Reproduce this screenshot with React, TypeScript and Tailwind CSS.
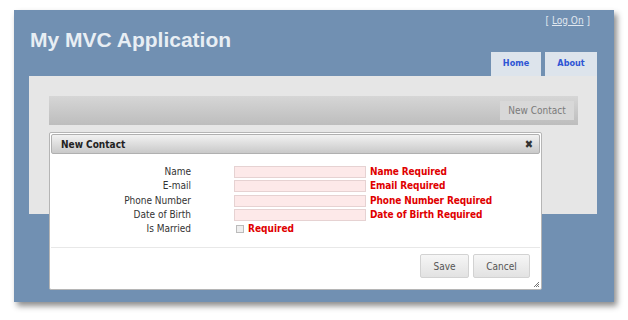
import React from "react";

const verdana = { fontFamily: '"DejaVu Sans Condensed", "DejaVu Sans", sans-serif' };

function Row({ label, error }: { label: string; error: string }) {
  return (
    <div className="flex items-center h-[12px]">
      <div className="w-[140px] text-right text-[10px] leading-[12px] text-[#333]">{label}</div>
      <div className="ml-[43px] w-[132px] h-[12px] bg-[#fde9e9] border border-[#e6d2d2]" />
      <div className="ml-[4px] text-[10px] leading-[12px] font-bold text-[#e00000] tracking-[-0.1px]">{error}</div>
    </div>
  );
}

export default function App() {
  return (
    <div className="relative w-[628px] h-[320px] bg-white overflow-hidden" style={verdana}>
      <div className="ml-[14px] mt-[10px] w-[600px] h-[292px] bg-[#7190b2] shadow-[3px_4px_6px_rgba(0,0,0,0.45)] flex flex-col">
        <div className="relative h-[66px]">
          <div
            className="absolute left-[16px] top-[19px] text-[21px] leading-[21px] font-bold text-[#e8eef4]"
            style={{ fontFamily: '"Liberation Sans", Arial, sans-serif' }}
          >
            My MVC Application
          </div>
          <div className="absolute right-[24px] top-[5px] text-[10px] leading-[12px] text-[#e0e7ef]">
            [ <span className="underline">Log On</span> ]
          </div>
          <div className="absolute right-[17px] top-[42px] flex gap-[4px]">
            <div className="w-[50px] h-[24px] bg-[#dde4ec] text-[#2f55d4] font-bold text-[9px] flex items-center justify-center">Home</div>
            <div className="w-[52px] h-[24px] bg-[#dde4ec] text-[#2f55d4] font-bold text-[9px] flex items-center justify-center">About</div>
          </div>
        </div>
        <div className="ml-[15px] w-[568px] h-[138px] bg-[#e6e6e6] pt-[20px] pl-[20px]">
          <div className="w-[529px] h-[29px] bg-gradient-to-b from-[#d6d6d6] to-[#bdbdbd] flex items-center justify-end pr-[4px]">
            <div className="w-[74px] h-[19px] bg-[#d8d8d8] text-[#7a7a7a] text-[10px] flex items-center justify-center">New Contact</div>
          </div>
        </div>
      </div>

      <div className="absolute left-[49px] top-[132px] w-[493px] h-[158px] bg-white border border-[#b5b5b5] rounded-[2px] p-[1px] flex flex-col">
        <div className="h-[20px] bg-gradient-to-b from-[#f2f2f2] to-[#c9c9c9] border border-[#b0b0b0] rounded-[2px] flex items-center justify-between pl-[9px] pr-[6px]">
          <span className="text-[10px] font-bold text-[#222]">New Contact</span>
          <span className="text-[11px] font-bold text-[#333] leading-none">✖</span>
        </div>
        <div className="pt-[12px] flex flex-col gap-[2.25px]">
          <Row label="Name" error="Name Required" />
          <Row label="E-mail" error="Email Required" />
          <Row label="Phone Number" error="Phone Number Required" />
          <Row label="Date of Birth" error="Date of Birth Required" />
          <div className="flex items-center h-[12px]">
            <div className="w-[140px] text-right text-[10px] leading-[12px] text-[#333]">Is Married</div>
            <div className="ml-[45px] w-[8px] h-[8px] border border-[#bbb] bg-[#eee]" />
            <div className="ml-[4px] text-[10px] leading-[12px] font-bold text-[#e00000]">Required</div>
          </div>
        </div>
        <div className="mt-[12px] h-px bg-[#e8e8e8]" />
        <div className="flex justify-end gap-[4px] pt-[6px] pr-[10px]">
          <div className="w-[49px] h-[24px] rounded-[2px] border border-[#d2d2d2] bg-gradient-to-b from-[#f6f6f6] to-[#e2e2e2] text-[#555] text-[10px] flex items-center justify-center">Save</div>
          <div className="w-[57px] h-[24px] rounded-[2px] border border-[#d2d2d2] bg-gradient-to-b from-[#f6f6f6] to-[#e2e2e2] text-[#555] text-[10px] flex items-center justify-center">Cancel</div>
        </div>
        <svg className="absolute right-[1px] bottom-[1px]" width="7" height="7" viewBox="0 0 7 7">
          <path d="M6 1 L1 6 M6 3 L3 6 M6 5 L5 6" stroke="#777" strokeWidth="1" />
        </svg>
      </div>
    </div>
  );
}
